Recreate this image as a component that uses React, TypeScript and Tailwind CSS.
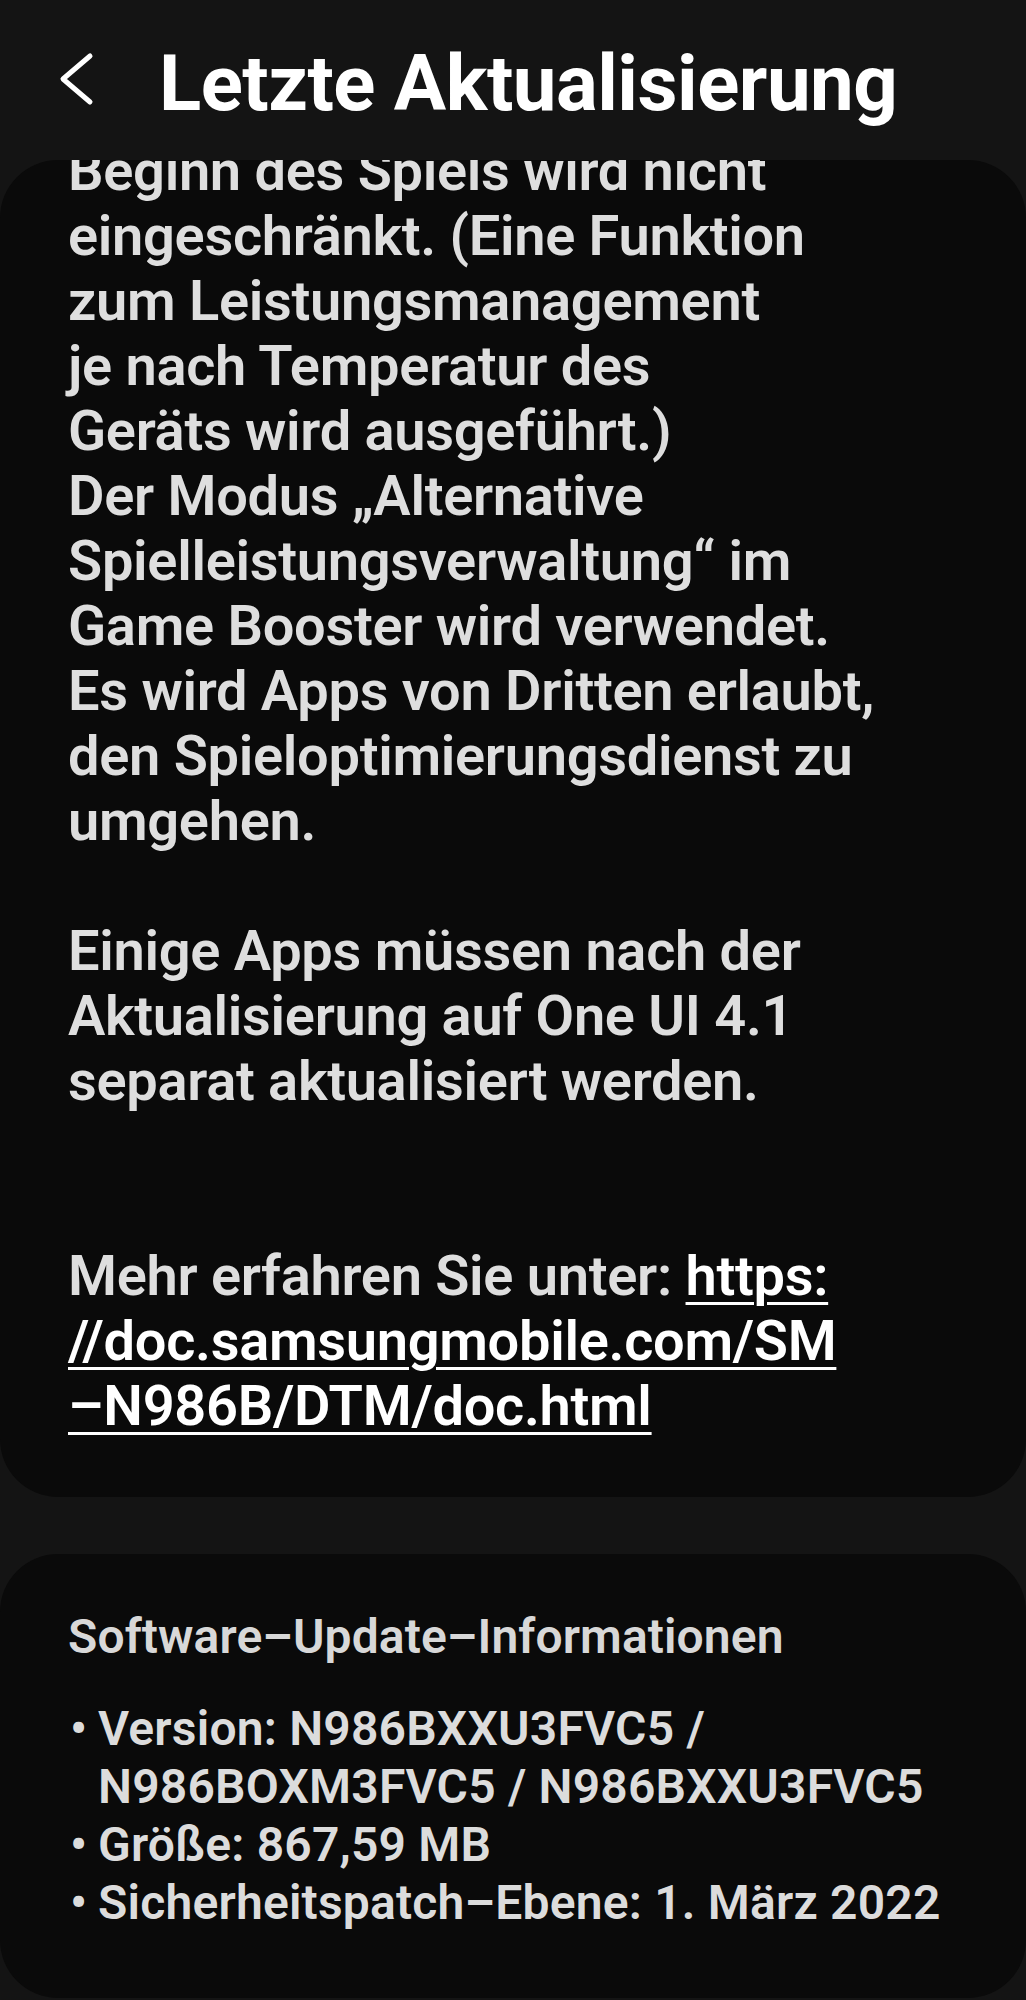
const notes = [
  "Beginn des Spiels wird nicht",
  "eingeschränkt. (Eine Funktion",
  "zum Leistungsmanagement",
  "je nach Temperatur des",
  "Geräts wird ausgeführt.)",
  "Der Modus „Alternative",
  "Spielleistungsverwaltung“ im",
  "Game Booster wird verwendet.",
  "Es wird Apps von Dritten erlaubt,",
  "den Spieloptimierungsdienst zu",
  "umgehen.",
  "",
  "Einige Apps müssen nach der",
  "Aktualisierung auf One UI 4.1",
  "separat aktualisiert werden.",
  "",
  "",
];

const info = [
  ["Version: N986BXXU3FVC5 /", "N986BOXM3FVC5 / N986BXXU3FVC5"],
  ["Größe: 867,59 MB"],
  ["Sicherheitspatch–Ebene: 1. März 2022"],
];

function BackIcon() {
  return (
    <svg width="36" height="54" viewBox="0 0 36 54" fill="none">
      <path
        d="M32 4 L5 27 L32 50"
        stroke="#ffffff"
        strokeWidth="5"
        strokeLinecap="round"
        strokeLinejoin="round"
      />
    </svg>
  );
}

export default function App() {
  return (
    <div
      className="min-h-[2000px] w-[1026px] bg-[#141414] overflow-hidden"
      style={{ fontFamily: "Roboto, 'Noto Sans', sans-serif" }}
    >
      {/* app bar */}
      <header className="h-[160px] flex items-start pt-[38px]">
        <div className="ml-[58px] mt-[14px]">
          <BackIcon />
        </div>
        <h1 className="ml-[65px] text-[78px] leading-[91px] font-bold text-white tracking-[-0.5px] whitespace-nowrap">
          Letzte Aktualisierung
        </h1>
      </header>

      {/* release notes card */}
      <section className="rounded-[58px] bg-[#0a0a0a] overflow-hidden h-[1337px]">
        <div className="-mt-[21px] px-[68px] text-[56px] leading-[65px] font-semibold tracking-[-0.3px] text-[#dedede]">
          {notes.map((line, i) => (
            <div key={i} className="whitespace-nowrap h-[65px]">
              {line}
            </div>
          ))}
          <div className="whitespace-nowrap">
            Mehr erfahren Sie unter:{" "}
            <a className="text-white underline decoration-[3px] underline-offset-[7px]">
              https:
            </a>
          </div>
          <div className="whitespace-nowrap">
            <a className="text-white underline decoration-[3px] underline-offset-[7px]">
              //doc.samsungmobile.com/SM
            </a>
          </div>
          <div className="whitespace-nowrap">
            <a className="text-white underline decoration-[3px] underline-offset-[7px]">
              –N986B/DTM/doc.html
            </a>
          </div>
        </div>
      </section>

      {/* software info card */}
      <section className="mt-[57px] rounded-[58px] bg-[#0a0a0a] h-[444px] pt-[54px] px-[68px] text-[48px] leading-[58px] font-semibold tracking-[0.2px] text-[#dcdcdc]">
        <div className="whitespace-nowrap tracking-[0.1px] text-[#d8d8d8]">
          Software–Update–Informationen
        </div>
        <ul className="mt-[34px]">
          {info.map((item, i) => (
            <li key={i} className="flex">
              <span className="w-[30px] shrink-0 pl-[2px]">•</span>
              <div>
                {item.map((l, j) => (
                  <div key={j} className="whitespace-nowrap">
                    {l}
                  </div>
                ))}
              </div>
            </li>
          ))}
        </ul>
      </section>
    </div>
  );
}
